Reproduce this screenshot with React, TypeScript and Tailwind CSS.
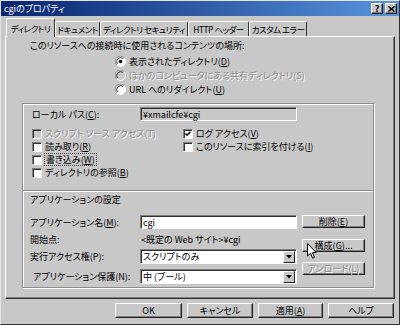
import React from 'react';

function U({ c }: { c: string }) {
  return <span className="underline underline-offset-1">{c}</span>;
}

function Btn({ children, className = '', disabled = false }: { children: React.ReactNode; className?: string; disabled?: boolean }) {
  return (
    <div
      className={`flex items-center justify-center bg-[#c8c8c8] border border-t-white border-l-white border-r-[#202020] border-b-[#202020] shadow-[inset_-1px_-1px_0_#808080] ${disabled ? 'text-[#8a8a8a] [text-shadow:1px_1px_0_#fff]' : 'text-black'} ${className}`}
    >
      {children}
    </div>
  );
}

function Check({ checked = false, disabled = false }: { checked?: boolean; disabled?: boolean }) {
  return (
    <div
      className={`w-[10px] h-[10px] shrink-0 border border-t-[#808080] border-l-[#808080] border-r-white border-b-white shadow-[inset_1px_1px_0_#303030] ${disabled ? 'bg-[#c8c8c8]' : 'bg-white'}`}
    >
      {checked && (
        <svg width="8" height="8" viewBox="0 0 8 8">
          <path d="M1.5 3.5 L3 5.2 L6.5 1.8" stroke="#000" strokeWidth="1.4" fill="none" />
        </svg>
      )}
    </div>
  );
}

function Radio({ selected = false, disabled = false }: { selected?: boolean; disabled?: boolean }) {
  return (
    <svg width="11" height="11" viewBox="0 0 11 11" className="shrink-0">
      <circle cx="5.5" cy="5.5" r="5" fill={disabled ? '#c8c8c8' : '#fff'} stroke="#fff" />
      <path d="M1.6 8.9 A5 5 0 0 1 8.9 1.6" stroke="#808080" strokeWidth="1" fill="none" />
      <path d="M2.5 8.1 A4 4 0 0 1 8.1 2.5" stroke="#303030" strokeWidth="1" fill="none" />
      {selected && <circle cx="5.5" cy="5.5" r="1.7" fill="#000" />}
    </svg>
  );
}

function Field({ children, className = '', white = true }: { children?: React.ReactNode; className?: string; white?: boolean }) {
  return (
    <div
      className={`flex items-center pl-[2px] border border-t-[#808080] border-l-[#808080] border-r-white border-b-white shadow-[inset_1px_1px_0_#303030] ${white ? 'bg-white' : 'bg-[#c8c8c8]'} ${className}`}
    >
      {children}
    </div>
  );
}

function Select({ value }: { value: string }) {
  return (
    <div className="flex w-[157px] h-[15px] bg-white border border-t-[#808080] border-l-[#808080] border-r-white border-b-white shadow-[inset_1px_1px_0_#303030]">
      <div className="flex-1 flex items-center pl-[2px] leading-[11px]">{value}</div>
      <div className="w-[12px] h-[12px] mt-px mr-px flex items-center justify-center bg-[#c8c8c8] border border-t-white border-l-white border-r-[#202020] border-b-[#202020]">
        <svg width="6" height="4" viewBox="0 0 6 4">
          <path d="M0 0 H6 L3 3.5 Z" fill="#000" />
        </svg>
      </div>
    </div>
  );
}

const dis = 'text-[#8a8a8a] [text-shadow:1px_1px_0_#fff]';

export default function App() {
  const tabs = [
    { label: 'ドキュメント', w: 'w-[45px]' },
    { label: 'ディレクトリ セキュリティ', w: 'w-[88px]' },
    { label: 'HTTP ヘッダー', w: 'w-[61px]' },
    { label: 'カスタム エラー', w: 'w-[58px]' },
  ];

  return (
    <div className="relative w-[400px] h-[325px] bg-[#c8c8c8] border border-t-[#e4e4e4] border-l-[#e4e4e4] border-r-[#303030] border-b-[#303030] font-['Noto_Sans_CJK_JP','Noto_Sans',sans-serif] [font-feature-settings:'palt'] text-[9px] leading-[11px] text-black overflow-hidden">
      {/* title bar */}
      <div className="h-[15px] flex items-center bg-gradient-to-r from-[#0a2470] to-[#5b95dc] pl-[3px] pr-[2px]">
        <span className="text-white text-[9px] leading-[11px]">cgiのプロパティ</span>
        <div className="ml-auto flex gap-[2px]">
          <Btn className="w-[12px] h-[11px] font-bold text-[9px] leading-[9px]">?</Btn>
          <Btn className="w-[12px] h-[11px]">
            <svg width="7" height="6" viewBox="0 0 7 6">
              <path d="M0.5 0.5 L6.5 5.5 M6.5 0.5 L0.5 5.5" stroke="#000" strokeWidth="1.5" />
            </svg>
          </Btn>
        </div>
      </div>

      <div className="px-[4px]">
        {/* tabs */}
        <div className="mt-[2px] h-[18px] flex items-end pl-[1px] whitespace-nowrap text-[8.5px] tracking-[-0.5px]">
          <div className="relative z-10 -mb-px h-[19px] w-[49px] flex items-center justify-center bg-[#c8c8c8] border-t border-l border-r border-t-white border-l-white border-r-[#303030] rounded-t-[2px]">
            ディレクトリ
          </div>
          {tabs.map((t, i) => (
            <div
              key={i}
              className={`h-[15px] ${t.w} flex items-center justify-center border-t border-l border-r border-t-white border-l-white border-r-[#303030] rounded-t-[2px]`}
            >
              {t.label}
            </div>
          ))}
        </div>

        {/* panel */}
        <div className="h-[263px] border border-t-white border-l-white border-r-[#303030] border-b-[#303030] shadow-[inset_-1px_-1px_0_#808080]">
          <div className="mt-[3px] pl-[24px] h-[11px]">このリソースへの接続時に使用されるコンテンツの場所:</div>

          <div className="mt-[3px] ml-[109px]">
            <div className="h-[14px] flex items-center gap-[3px]">
              <Radio selected />
              <span>
                表示されたディレクトリ(<U c="D" />)
              </span>
            </div>
            <div className="h-[14px] flex items-center gap-[3px]">
              <Radio disabled />
              <span className={dis}>ほかのコンピュータにある共有ディレクトリ(S)</span>
            </div>
            <div className="h-[14px] flex items-center gap-[3px]">
              <Radio />
              <span>
                URL へのリダイレクト(<U c="U" />)
              </span>
            </div>
          </div>

          {/* group box */}
          <div className="ml-[16px] mt-[7px] w-[352px] h-[185px] border border-[#8c8c8c] shadow-[inset_1px_1px_0_#fff,1px_1px_0_#fff]">
            <div className="mt-[3px] pl-[9px] h-[14px] flex items-center">
              <div className="w-[108px]">
                ローカル パス(<U c="C" />):
              </div>
              <Field white={false} className="w-[157px] h-[14px]">
                ¥xmailcfe¥cgi
              </Field>
            </div>

            <div className="mt-[6px] pl-[9px] grid grid-cols-[151px_1fr] auto-rows-[13px]">
              <div className="flex items-center gap-[3px]">
                <Check disabled />
                <span className={dis}>スクリプト ソース アクセス(T)</span>
              </div>
              <div className="flex items-center gap-[3px]">
                <Check checked />
                <span>
                  ログ アクセス(<U c="V" />)
                </span>
              </div>
              <div className="flex items-center gap-[3px]">
                <Check />
                <span>
                  読み取り(<U c="R" />)
                </span>
              </div>
              <div className="flex items-center gap-[3px]">
                <Check />
                <span>
                  このリソースに索引を付ける(<U c="I" />)
                </span>
              </div>
              <div className="flex items-center gap-[3px]">
                <Check />
                <span className="outline outline-1 outline-dotted outline-[#404040] px-px">
                  書き込み(<U c="W" />)
                </span>
              </div>
              <div />
              <div className="flex items-center gap-[3px]">
                <Check />
                <span>
                  ディレクトリの参照(<U c="B" />)
                </span>
              </div>
            </div>

            <div className="mt-[11px] border-t border-t-[#8c8c8c] border-b border-b-white" />

            <div className="mt-[2px] pl-[7px] h-[12px] leading-[12px]">アプリケーションの設定</div>

            <div className="mt-[9px] pl-[7px] flex">
              <div className="w-[267px]">
                <div className="h-[14px] flex items-center">
                  <div className="w-[110px]">
                    アプリケーション名(<U c="M" />):
                  </div>
                  <Field className="w-[157px] h-[14px]">cgi</Field>
                </div>
                <div className="mt-[3px] h-[14px] flex items-center">
                  <div className="w-[110px]">開始点:</div>
                  <div className="pl-[1px]">&lt;既定の Web サイト&gt;¥cgi</div>
                </div>
                <div className="mt-[3px] h-[15px] flex items-center">
                  <div className="w-[110px]">実行アクセス権(P):</div>
                  <Select value="スクリプトのみ" />
                </div>
                <div className="mt-[5px] h-[15px] flex items-center">
                  <div className="w-[110px] pl-[3px]">アプリケーション保護(N):</div>
                  <Select value="中 (プール)" />
                </div>
              </div>
              <div className="ml-[5px] w-[63px]">
                <Btn className="h-[13px]">
                  削除(<U c="E" />)
                </Btn>
                <Btn className="mt-[11px] h-[13px]">
                  構成(<U c="G" />)...
                </Btn>
                <Btn disabled className="mt-[10px] h-[13px]">
                  アンロード(L)
                </Btn>
              </div>
            </div>
          </div>
        </div>

        {/* bottom buttons */}
        <div className="mt-[4px] pl-[110px] flex gap-[5px]">
          <Btn className="w-[67px] h-[15px]">OK</Btn>
          <Btn className="w-[66px] h-[15px]">キャンセル</Btn>
          <Btn className="w-[65px] h-[15px]">
            適用(<U c="A" />)
          </Btn>
          <Btn className="w-[66px] h-[15px]">ヘルプ</Btn>
        </div>
      </div>

      {/* mouse cursor */}
      <svg width="10" height="17" viewBox="0 0 10 17" className="absolute left-[306px] top-[242px]">
        <path d="M0.5 0.5 V13 L3.5 10.2 L5.6 15.2 L7.4 14.4 L5.4 9.6 H9.2 Z" fill="#fff" stroke="#000" strokeWidth="1" />
      </svg>
    </div>
  );
}
